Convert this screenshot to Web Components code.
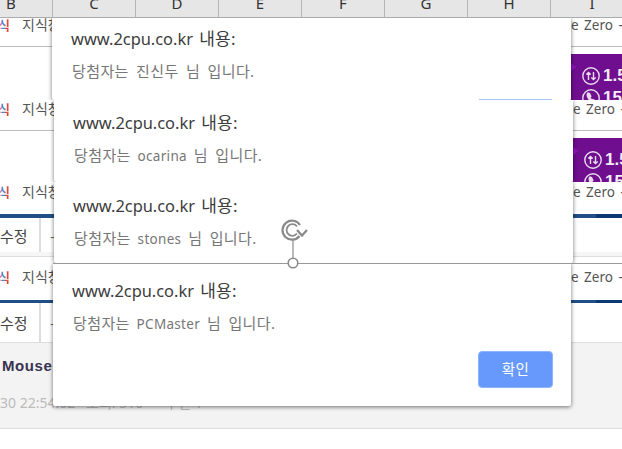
<!DOCTYPE html>
<html>
<head>
<meta charset="utf-8">
<style>
  html, body { margin: 0; height: 449px; overflow: hidden; background: #fff; }
  body { font-family: "Noto Sans", "Noto Sans CJK KR", sans-serif; }
  .ko { font-size: 15px; letter-spacing: .4px; }
  .ko-t { font-size: 17px; letter-spacing: .2px; }
</style>
</head>
<body>
<collage-page>
  <sheet-header></sheet-header>

  <clip-strip style="--l:52px;--r:51px;height:82px">
    <site-row slot="back" style="--head:28px;--tt:-1px">
      <purple-promo></purple-promo>
    </site-row>
    <alert-box style="--pt:10px;--px:19px">
      <span slot="title">www.2cpu.co.kr <span class="ko-t">내용:</span></span>
      <span class="ko">당첨자는 진신두 님 입니다.</span>
      <span slot="foot" class="edge"></span>
    </alert-box>
  </clip-strip>

  <clip-strip style="--l:54px;--r:49px;height:82px">
    <site-row slot="back" style="--head:30px;--tt:1px">
      <purple-promo></purple-promo>
    </site-row>
    <alert-box style="--pt:12px;--px:19px">
      <span slot="title">www.2cpu.co.kr <span class="ko-t">내용:</span></span>
      <span class="ko">당첨자는</span> ocarina <span class="ko">님 입니다.</span>
    </alert-box>
  </clip-strip>

  <clip-strip style="--l:54px;--r:49px;height:81px">
    <site-row slot="back" style="--head:32px;--tt:2px">
      <blue-bar></blue-bar>
      <edit-row style="--h:34px"></edit-row>
      <div style="height:4px;background:#f6f6f6;border-bottom:1px solid #ddd"></div>
    </site-row>
    <alert-box style="--pt:13px;--px:19px">
      <span slot="title">www.2cpu.co.kr <span class="ko-t">내용:</span></span>
      <span class="ko">당첨자는</span> stones <span class="ko">님 입니다.</span>
    </alert-box>
  </clip-strip>

  <clip-strip ruled style="--l:53px;--r:51px;height:166px">
    <site-row slot="back" style="--head:37px;--tt:6px">
      <blue-bar style="height:3px"></blue-bar>
      <edit-row style="--h:39px"></edit-row>
      <post-meta></post-meta>
    </site-row>
    <alert-box style="--pt:17px;--px:19px;--bottom:23px;height:143px">
      <span slot="title">www.2cpu.co.kr <span class="ko-t">내용:</span></span>
      <span class="ko">당첨자는</span> PCMaster <span class="ko">님 입니다.</span>
      <ok-button slot="foot">확인</ok-button>
    </alert-box>
  </clip-strip>

  <rotate-handle></rotate-handle>
</collage-page>

<script>
class CollagePage extends HTMLElement {
  connectedCallback() {
    this.attachShadow({ mode: 'open' });
    this.shadowRoot.innerHTML = `
      <style>
        :host { display: flex; flex-direction: column; position: relative; width: 622px; height: 449px; overflow: hidden; }
      </style>
      <slot></slot>
    `;
  }
}

class SheetHeader extends HTMLElement {
  connectedCallback() {
    this.attachShadow({ mode: 'open' });
    const cells = 'BCDEFGHI'.split('').map(c => `<div>${c}</div>`).join('');
    this.shadowRoot.innerHTML = `
      <style>
        :host { display: block; height: 17px; background: #e6e6e6; border-bottom: 1px solid #ababab; overflow: hidden; flex: none; }
        .cols { display: grid; grid-template-columns: repeat(8, 83px); margin-left: -30px; height: 17px; }
        .cols div {
          border-right: 1px solid #b5b5b5; text-align: center; box-sizing: border-box;
          font: 15px/6px "Noto Sans", sans-serif; color: #333;
        }
      </style>
      <div class="cols">${cells}</div>
    `;
  }
}

class ClipStrip extends HTMLElement {
  connectedCallback() {
    this.attachShadow({ mode: 'open' });
    this.shadowRoot.innerHTML = `
      <style>
        :host { display: grid; overflow: hidden; flex: none; box-sizing: border-box; }
        :host([ruled]) .rule { display: block; }
        .rule { display: none; grid-area: 1 / 1; height: 1px; background: #999; margin-left: var(--l); z-index: 2; align-self: start; }
        .back, .front { grid-area: 1 / 1; min-width: 0; min-height: 0; }
        .back { display: grid; }
        .front { display: grid; margin-left: var(--l); margin-right: var(--r); z-index: 1; }
      </style>
      <div class="back"><slot name="back"></slot></div>
      <div class="front"><slot></slot></div>
      <div class="rule"></div>
    `;
  }
}

class SiteRow extends HTMLElement {
  connectedCallback() {
    this.attachShadow({ mode: 'open' });
    this.shadowRoot.innerHTML = `
      <style>
        :host { display: flex; flex-direction: column; min-width: 0; }
        .head {
          height: var(--head); box-sizing: border-box; display: flex; justify-content: space-between;
          align-items: flex-start; flex: none;
          font: 14px/16px "Noto Sans", "Noto Sans CJK KR", sans-serif; color: #555;
        }
        .site { display: flex; white-space: nowrap; width: 60px; overflow: hidden; margin-top: var(--tt); }
        .mark {
          flex: none; width: 13px; margin: 0 11px 0 -2px; font-weight: 700; overflow: hidden;
          background: linear-gradient(90deg, #d77fb0 0 30%, #3d8fd6 30% 55%, #e0483a 55%);
          -webkit-background-clip: text; background-clip: text; color: transparent;
          font-size: 13px; letter-spacing: 0;
        }
        .tail {
          width: var(--r); white-space: nowrap; overflow: hidden; box-sizing: border-box;
          padding-left: 0; word-spacing: 2px; margin-top: var(--tt); font-size: 13.500px;
        }
      </style>
      <div class="head">
        <div class="site"><span class="mark">식</span><span>지식창고</span></div>
        <div class="tail">e Zero -</div>
      </div>
      <slot></slot>
    `;
  }
}

class PurplePromo extends HTMLElement {
  connectedCallback() {
    this.attachShadow({ mode: 'open' });
    this.shadowRoot.innerHTML = `
      <style>
        :host { display: block; border-top: 1px solid #bdbdbd; padding-top: 7px; height: 60px; }
        .band {
          height: 60px; margin-left: calc(622px - var(--r)); background: #6f0e8f; position: relative;
          padding: 13px 0 0 11px; box-sizing: border-box; overflow: hidden;
          font: 700 17px/18px "Liberation Sans", sans-serif; color: #f4eef7;
        }
        .band::before {
          content: ""; position: absolute; left: 0; top: 9px; border: 4px solid transparent;
          border-left: 5px solid #8f12c4;
        }
        .line { display: flex; align-items: center; gap: 3px; margin-bottom: 4px; white-space: nowrap; }
        svg { width: 18px; height: 18px; flex: none; }
      </style>
      <div class="band">
        <div class="line">
          <svg viewBox="0 0 18 18" fill="none" stroke="#e9dcef" stroke-width="1.4">
            <circle cx="9" cy="9" r="8.2"/>
            <path d="M6.5 13V5.5M4.3 7.6l2.2-2.2 2.2 2.2M11.5 5v7.5M9.3 10.4l2.2 2.2 2.2-2.2"/>
          </svg>
          <span>1.5</span>
        </div>
        <div class="line">
          <svg viewBox="0 0 18 18" fill="none" stroke="#e9dcef" stroke-width="1.4">
            <circle cx="9" cy="9" r="8.2"/>
            <path d="M6 4c-1 1-1 3 .5 5.5S10.500 13.500 12.500 13.500l1-1.500-2.500-1.500-1 .8C9 10.500 8 9 7.800 8l1-.8L7.500 4.500z" fill="#e9dcef"/>
          </svg>
          <span>15</span>
        </div>
      </div>
    `;
  }
}

class BlueBar extends HTMLElement {
  connectedCallback() {
    this.attachShadow({ mode: 'open' });
    this.shadowRoot.innerHTML = `
      <style>
        :host { display: block; height: 4px; background: linear-gradient(90deg, #1f4f85 0 596px, #0b3a70 596px); flex: none; }
      </style>
    `;
  }
}

class EditRow extends HTMLElement {
  connectedCallback() {
    this.attachShadow({ mode: 'open' });
    this.shadowRoot.innerHTML = `
      <style>
        :host { display: flex; height: var(--h); flex: none; font: 15px/1 "Noto Sans CJK KR", sans-serif; color: #444; }
        .cell { width: 41px; border-right: 2px solid #ddd; box-sizing: border-box; display: flex; align-items: center; }
        .dash { margin-left: 9px; align-self: center; color: #666; }
      </style>
      <div class="cell">수정</div>
      <div class="dash">-</div>
    `;
  }
}

class PostMeta extends HTMLElement {
  connectedCallback() {
    this.attachShadow({ mode: 'open' });
    this.shadowRoot.innerHTML = `
      <style>
        :host {
          display: flex; flex-direction: column; height: 87px; box-sizing: border-box; flex: none;
          background: #f3f3f3; border-top: 1px solid #ddd; border-bottom: 1px solid #ddd;
          padding: 14px 0 0 2px;
        }
        .name { font: 700 15px/18px "Liberation Sans", sans-serif; letter-spacing: .6px; color: #38334f; }
        .info { display: flex; margin: 19px 0 0 -2px; font: 14px/18px "Noto Sans", "Noto Sans CJK KR", sans-serif; color: #bbb; white-space: nowrap; }
        .info span:first-child { width: 86px; }
        .info span:nth-child(2) { width: 79px; }
      </style>
      <div class="name">Mouse</div>
      <div class="info"><span>30 22:54:02</span><span>조회: 510</span><span>추천 1</span></div>
    `;
  }
}

class AlertBox extends HTMLElement {
  connectedCallback() {
    this.attachShadow({ mode: 'open' });
    this.shadowRoot.innerHTML = `
      <style>
        :host {
          display: flex; flex-direction: column; box-sizing: border-box; background: #fff; min-height: 0;
          padding: var(--pt) 19px 0 var(--px); margin-bottom: var(--bottom, 0);
          border-radius: 0 0 2px 2px;
          box-shadow: 0 1px 4px rgba(0,0,0,.55);
          font: 13.500px/18px "Noto Sans", "Noto Sans CJK KR", sans-serif; color: #767676;
        }
        .title { font-size: 16.400px; line-height: 22px; color: #3c3c3c; margin-bottom: 12px; word-spacing: 2px; white-space: nowrap; }
        .msg { margin-left: 1px; white-space: nowrap; word-spacing: 3px; letter-spacing: .3px; }
        .foot { margin-top: auto; display: flex; justify-content: flex-end; }
        ::slotted(.edge) { display: block; width: 73px; height: 1px; background: #a9c3f7; }
      </style>
      <div class="title"><slot name="title"></slot></div>
      <div class="msg"><slot></slot></div>
      <div class="foot"><slot name="foot"></slot></div>
    `;
  }
}

class OkButton extends HTMLElement {
  connectedCallback() {
    this.attachShadow({ mode: 'open' });
    this.shadowRoot.innerHTML = `
      <style>
        :host {
          display: flex; align-items: center; justify-content: center; width: 75px; height: 37px;
          margin: 0 -1px 18px 0; box-sizing: border-box; background: #6699fb; border: 1px solid #8fb4fb;
          border-radius: 4px; color: #fff; font: 14.500px/1 "Noto Sans CJK KR", sans-serif; letter-spacing: .5px;
        }
      </style>
      <slot></slot>
    `;
  }
}

class RotateHandle extends HTMLElement {
  connectedCallback() {
    this.attachShadow({ mode: 'open' });
    this.shadowRoot.innerHTML = `
      <style>
        :host { position: absolute; left: 280px; top: 218px; width: 30px; height: 52px; z-index: 5; }
        svg { display: block; }
      </style>
      <svg width="30" height="52" viewBox="0 0 30 52" fill="none" stroke="#8a8a8a">
        <path stroke-width="2.200" d="M20 7A9.500 9.500 0 1 0 19.500 18"/>
        <path stroke-width="1.800" d="M17 8.500A5.800 5.800 0 1 0 17 15.500"/>
        <path stroke-width="2.200" d="M17 12l5 5.500 5-5.500"/>
        <path stroke-width="1.200" d="M13 21V40"/>
        <circle cx="13" cy="45" r="4.800" fill="#fff" stroke-width="1.600"/>
      </svg>
    `;
  }
}

customElements.define('collage-page', CollagePage);
customElements.define('sheet-header', SheetHeader);
customElements.define('clip-strip', ClipStrip);
customElements.define('site-row', SiteRow);
customElements.define('purple-promo', PurplePromo);
customElements.define('blue-bar', BlueBar);
customElements.define('edit-row', EditRow);
customElements.define('post-meta', PostMeta);
customElements.define('alert-box', AlertBox);
customElements.define('ok-button', OkButton);
customElements.define('rotate-handle', RotateHandle);
</script>
</body>
</html>
